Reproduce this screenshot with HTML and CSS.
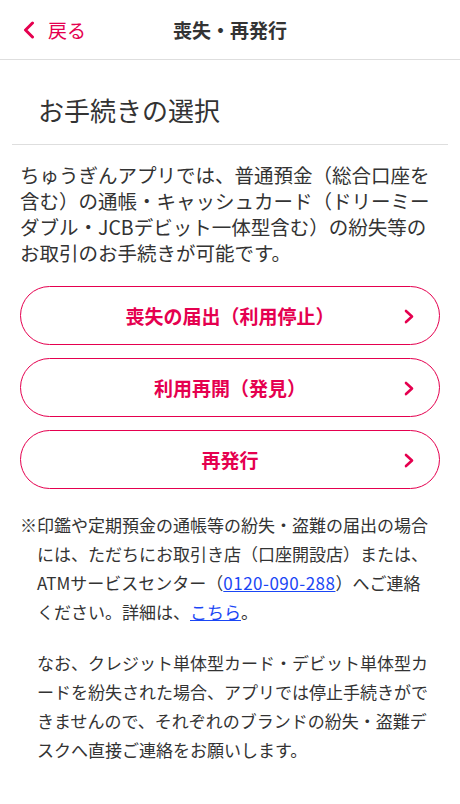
FILE: index.html
```html
<!doctype html>
<html lang="ja">
<head>
    <meta charset="UTF-8">
    <meta name="viewport" content="width=device-width, initial-scale=1.0">
    <title>喪失・再発行</title>
    <link rel="stylesheet" href="styles.css">
</head>
<body>
<header class="app-header">
    <a class="back" href="#">
        <svg class="back-icon" viewBox="0 0 12 18" width="12" height="18">
            <path d="M9.5 2 L2.5 9 L9.5 16" fill="none" stroke="currentColor" stroke-width="3" stroke-linecap="round" stroke-linejoin="round"/>
        </svg>
        <span>戻る</span>
    </a>
    <h1 class="app-title">喪失・再発行</h1>
    <span></span>
</header>

<main>
    <h2 class="section-title">お手続きの選択</h2>

    <p class="intro">ちゅうぎんアプリでは、普通預金（総合口座を含む）の通帳・キャッシュカード（ドリーミーダブル・JCBデビット一体型含む）の紛失等のお取引のお手続きが可能です。</p>

    <nav class="menu">
        <a class="menu-btn" href="#">
            <span>喪失の届出（利用停止）</span>
            <svg class="chevron" viewBox="0 0 10 15" width="10" height="15">
                <path d="M2 2 L8 7.5 L2 13" fill="none" stroke="currentColor" stroke-width="2.6" stroke-linecap="round" stroke-linejoin="round"/>
            </svg>
        </a>
        <a class="menu-btn" href="#">
            <span>利用再開（発見）</span>
            <svg class="chevron" viewBox="0 0 10 15" width="10" height="15">
                <path d="M2 2 L8 7.5 L2 13" fill="none" stroke="currentColor" stroke-width="2.6" stroke-linecap="round" stroke-linejoin="round"/>
            </svg>
        </a>
        <a class="menu-btn" href="#">
            <span>再発行</span>
            <svg class="chevron" viewBox="0 0 10 15" width="10" height="15">
                <path d="M2 2 L8 7.5 L2 13" fill="none" stroke="currentColor" stroke-width="2.6" stroke-linecap="round" stroke-linejoin="round"/>
            </svg>
        </a>
    </nav>

    <div class="notes">
        <p class="note">※印鑑や定期預金の通帳等の紛失・盗難の届出の場合には、ただちにお取引き店（口座開設店）または、ATMサービスセンター（<a class="tel" href="#">0120-090-288</a>）へご連絡<br>ください。詳細は、<a href="#">こちら</a>。</p>
        <p class="note-sub">なお、クレジット単体型カード・デビット単体型カードを紛失された場合、アプリでは停止手続きができませんので、それぞれのブランドの紛失・盗難デスクへ直接ご連絡をお願いします。</p>
    </div>
</main>
</body>
</html>
```

FILE: styles.css
```css
body {
    margin: 0;
    background: #fff;
    color: #333;
    font-family: "Noto Sans CJK JP", "Noto Sans", sans-serif;
}

a {
    text-decoration: none;
}

.app-header {
    display: grid;
    grid-template-columns: 1fr auto 1fr;
    align-items: center;
    height: 59px;
    border-bottom: 1px solid #dedede;

    .back {
        display: flex;
        align-items: center;
        gap: 13px;
        padding-left: 23px;
        color: #e5004f;
        font-size: 19px;

        .back-icon {
            display: block;
        }
    }

    .app-title {
        margin: 0;
        font-size: 19px;
        font-weight: 700;
        color: #333;
    }
}

.section-title {
    margin: 0 12px;
    padding: 30px 0 15px 26px;
    font-size: 26px;
    font-weight: 400;
    line-height: 39px;
    border-bottom: 1px solid #dedede;
}

.intro {
    margin: 17px 20px 0;
    font-size: 19.5px;
    line-height: 26px;
}

.menu {
    display: flex;
    flex-direction: column;
    gap: 13px;
    margin: 20px 20px 0;

    .menu-btn {
        position: relative;
        display: flex;
        align-items: center;
        justify-content: center;
        height: 57px;
        border: 1.5px solid #e5004f;
        border-radius: 31px;
        color: #e5004f;
        font-size: 19px;
        font-weight: 700;

        .chevron {
            position: absolute;
            right: 25px;
            top: 50%;
            margin-top: -7px;
        }
    }
}

.notes {
    margin: 21px 20px 40px;
    font-size: 17px;
    line-height: 29px;

    p {
        margin: 0;
    }

    .note {
        padding-left: 1em;
        text-indent: -1em;
    }

    .note-sub {
        margin-top: 22px;
        padding-left: 1em;
    }

    a {
        color: #1a46f5;
        text-decoration: underline;
    }

    .tel {
        letter-spacing: 0.5px;
    }
}
```
